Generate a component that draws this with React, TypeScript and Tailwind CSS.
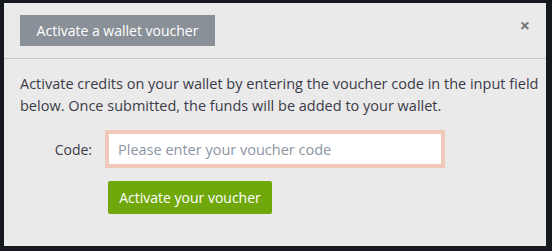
export default function App() {
  return (
    <div
      className="w-[552px] h-[251px] bg-[#15181c] pl-[4px] pt-[3px]"
      style={{ fontFamily: '"Open Sans", "Liberation Sans", sans-serif' }}
    >
      <div className="w-[542px] h-[243px] bg-[#eaeaea]">
        {/* Header */}
        <div className="flex items-start justify-between px-[16px] pt-[12px] pb-[12px] border-b border-[#c6c6c6]">
          <div className="h-[31px] w-[195px] bg-[#899097] text-white text-[14px] flex items-center justify-center">
            Activate a wallet voucher
          </div>
          <button className="mt-[1px] text-[#757575] text-[18px] font-bold leading-none">
            ×
          </button>
        </div>

        {/* Body */}
        <div className="pl-[16px] pr-[8px] pt-[14px]">
          <p className="text-[14.5px] leading-[22px] text-[#3b3b48] whitespace-nowrap">
            Activate credits on your wallet by entering the voucher code in the input field
            <br />
            below. Once submitted, the funds will be added to your wallet.
          </p>

          <div className="flex items-center mt-[13px]">
            <label className="w-[72px] text-right text-[14px] text-[#3b3b48]">Code:</label>
            <div className="ml-[13px] w-[340px] h-[38px] border-[4px] border-[#f0c9bb] bg-white flex items-center">
              <input
                autoFocus
                className="w-full h-full px-[9px] text-[14.5px] text-[#333] caret-[#333] placeholder:text-[#8b95a3] outline-none bg-transparent"
                placeholder="Please enter your voucher code"
              />
            </div>
          </div>

          <button className="ml-[88px] mt-[13px] h-[33px] w-[164px] rounded-[2px] bg-[#70a80c] text-white text-[14px]">
            Activate your voucher
          </button>
        </div>
      </div>
    </div>
  );
}
